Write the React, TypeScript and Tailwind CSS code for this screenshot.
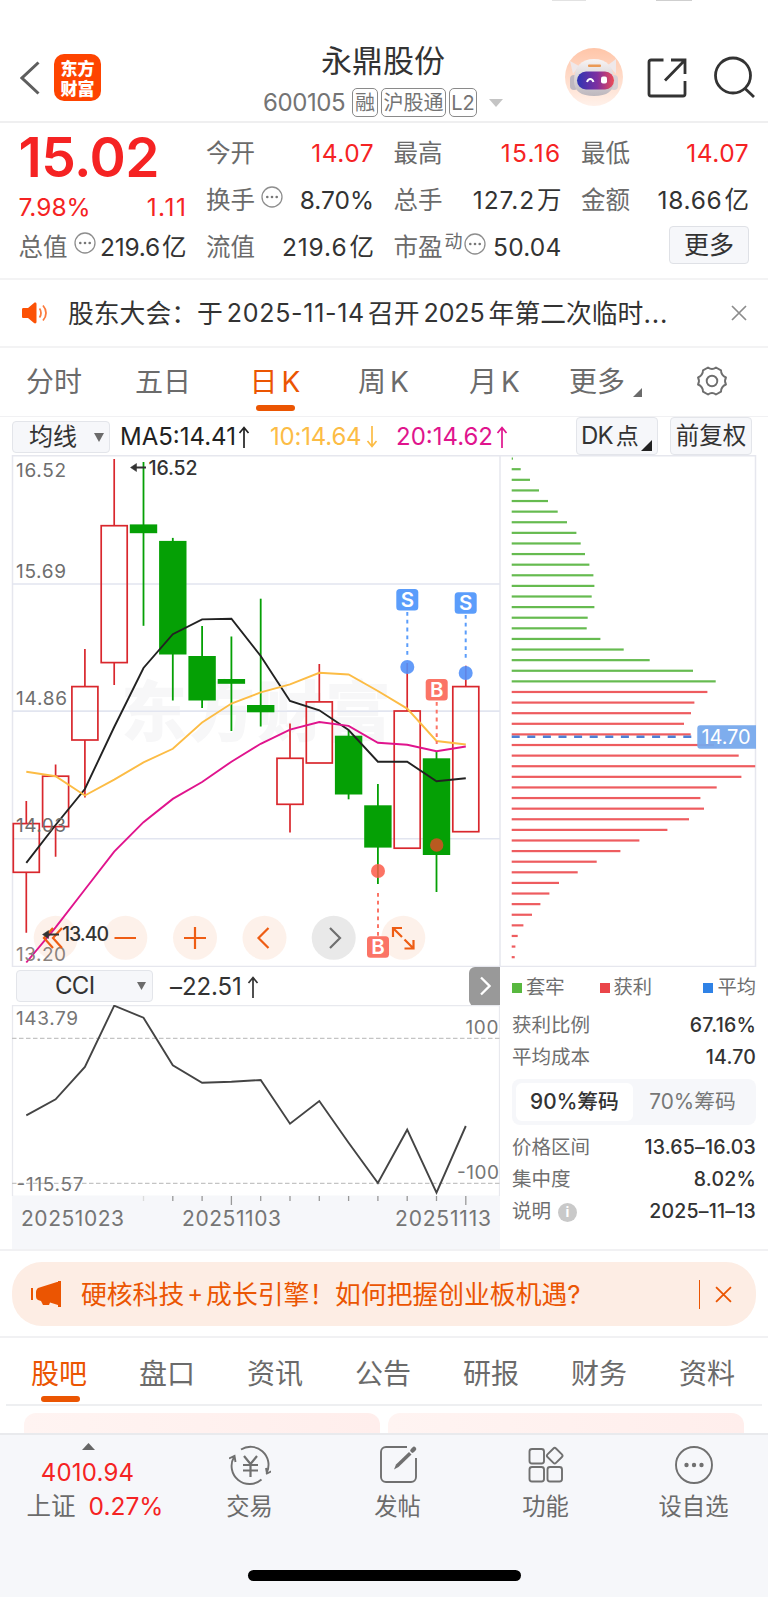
import React from 'react';
import clsx from 'clsx';

type Point = [number, number];

interface Candle {
  high: number;
  top: number;
  bottom: number;
  low: number;
  up: boolean;
}

// y positions inside the K-line canvas, one entry per trading day
const CANDLES: Candle[] = [
  { high: 801, top: 823.6, bottom: 872.3, low: 932.8, up: true },
  { high: 764.4, top: 776.2, bottom: 826.6, low: 856.7, up: true },
  { high: 649.1, top: 686.6, bottom: 740, low: 797.5, up: true },
  { high: 459, top: 525.7, bottom: 662.6, low: 685, up: true },
  { high: 462, top: 524.4, bottom: 533.2, low: 625.8, up: false },
  { high: 537.9, top: 540.9, bottom: 654.5, low: 700.5, up: false },
  { high: 626, top: 656, bottom: 700.5, low: 708, up: false },
  { high: 636.5, top: 679, bottom: 683.8, low: 731, up: false },
  { high: 598.7, top: 705, bottom: 712.3, low: 726.5, up: false },
  { high: 723.5, top: 758.3, bottom: 804.3, low: 832.4, up: true },
  { high: 664, top: 701.9, bottom: 763, low: 763, up: true },
  { high: 730, top: 735.7, bottom: 794.5, low: 799.3, up: false },
  { high: 784, top: 805.3, bottom: 847.6, low: 884, up: false },
  { high: 663, top: 711, bottom: 848.2, low: 848.2, up: true },
  { high: 752, top: 758.3, bottom: 855, low: 892, up: false },
  { high: 665.7, top: 686.6, bottom: 831.7, low: 831.7, up: true },
];

const MA5 = [862.8, 825, 789, 727, 668, 634.2, 619.4, 618.7, 656, 701, 710.3, 730, 761.7, 761.7, 781.3, 778.3];
const MA10 = [771.8, 776.2, 795.5, 779.6, 762.4, 748.8, 722.5, 703.5, 692.4, 684.3, 672.8, 674.5, 691, 708.6, 741, 744.5];
const MA20 = [962.5, 927.3, 889.5, 851.6, 822.2, 798.9, 782, 761.7, 743.8, 729.6, 722, 725.9, 742.8, 744.8, 751.2, 746.5];
const CCI = [1115.3, 1099.3, 1067, 1005.7, 1017.7, 1065.3, 1082.7, 1081.7, 1080, 1123.7, 1101, 1142.7, 1183, 1129.7, 1192.7, 1126];

const CHIPS_LOCKED = [1.3, 9, 18.3, 27.3, 36.3, 46, 55.3, 64.7, 69, 73.3, 77.7, 81.7, 82.7, 80, 82.7, 76, 75, 88.7, 112, 138, 181.3, 204];
const CHIPS_PROFIT = [195.7, 182.7, 179.3, 172.3, 179, 202.3, 227, 243.5, 229.7, 205, 188.7, 192.3, 177.3, 155.7, 127.7, 108.7, 85, 66, 47.3, 37.7, 28.7, 20.3, 11.7, 6, 3.7, 3];

const dayX = (i: number) => 26.3 + i * 29.3;
const toLine = (ys: number[]) => ys.map((y, i): Point => [dayX(i), y]).map((p) => p.join(',')).join(' ');

const MoreDots = ({ className }: { className?: string }) => (
  <svg viewBox="0 0 22 22" className={clsx('w-[22px] h-[22px] shrink-0', className)}>
    <circle cx="11" cy="11" r="10" fill="none" stroke="#8e8e8e" strokeWidth="1.3" />
    <circle cx="6.3" cy="11" r="1.3" fill="#777" />
    <circle cx="11" cy="11" r="1.3" fill="#777" />
    <circle cx="15.7" cy="11" r="1.3" fill="#777" />
  </svg>
);

const Cross = ({ size, color }: { size: number; color: string }) => (
  <svg width={size} height={size} viewBox="0 0 16 16">
    <path d="M1 1l14 14M15 1L1 15" stroke={color} strokeWidth="1.7" fill="none" />
  </svg>
);

const Header = () => (
  <header className="h-[123px] border-b-2 border-[#efeff0] flex pt-[44px] pl-[20px] pr-[12px] relative">
    <div className="absolute top-0 left-[552px] w-[34px] h-px bg-[#e2e2e2]" />
    <div className="absolute top-0 left-[656px] w-[36px] h-px bg-[#cfcfcf]" />
    <div className="flex items-start w-[242px] pt-[10px]">
      <svg width="20" height="46" viewBox="0 0 20 46">
        <path d="M18.5 8.5L2 24l16.500 15.500" fill="none" stroke="#5e5e5e" strokeWidth="3" />
      </svg>
      <div className="ml-[14px] w-[47px] h-[47px] rounded-[10px] bg-[#fe4400] text-white font-black text-[17px] flex flex-col items-center justify-center">
        <span className="h-[20px] leading-[20px] font-['Noto_Sans_CJK_SC',sans-serif]">东方</span>
        <span className="h-[20px] leading-[20px] font-['Noto_Sans_CJK_SC',sans-serif]">财富</span>
      </div>
    </div>
    <div className="flex flex-col items-center w-[242px]">
      <h1 className="text-[31px] leading-[34px] text-[#333]">永鼎股份</h1>
      <div className="flex items-center mt-[10px] text-[#747474] text-[20px] h-[29px]">
        <span className="text-[24px] tracking-[-0.4px] w-[89px]">600105</span>
        <span className="border-[1.5px] border-[#8a8a8a] rounded-[5px] h-[29px] w-[26px] flex items-center justify-center">融</span>
        <span className="border-[1.5px] border-[#8a8a8a] rounded-[5px] h-[29px] w-[65px] ml-[3px] flex items-center justify-center">沪股通</span>
        <span className="border-[1.5px] border-[#8a8a8a] rounded-[5px] h-[29px] w-[28px] ml-[3px] flex items-center justify-center">L2</span>
        <svg width="14" height="8" viewBox="0 0 14 8" className="ml-[12px]">
          <path d="M0 0h14L7 8z" fill="#c4c4c4" />
        </svg>
      </div>
    </div>
    <div className="flex items-start ml-auto">
      <svg width="60" height="60" viewBox="0 0 60 60" className="mt-[3px]">
        <defs>
          <linearGradient id="halo" x1="0" y1="0" x2="0" y2="1">
            <stop offset="0" stopColor="#ffc5a8" />
            <stop offset="1" stopColor="#fff1ea" />
          </linearGradient>
          <linearGradient id="visor" x1="0" y1="0" x2="1" y2="0">
            <stop offset="0" stopColor="#2d35b4" />
            <stop offset="0.55" stopColor="#7f2fa0" />
            <stop offset="1" stopColor="#ee4a55" />
          </linearGradient>
          <linearGradient id="shell" x1="0" y1="0" x2="0" y2="1">
            <stop offset="0" stopColor="#f8f4f4" />
            <stop offset="1" stopColor="#bdb7bd" />
          </linearGradient>
        </defs>
        <circle cx="30" cy="30" r="29" fill="url(#halo)" />
        <path d="M6 14l9 5-6 8zM52 12l-8 6 8 9z" fill="#efe8ea" />
        <rect x="6" y="28" width="8" height="15" rx="4" fill="#bfb8c0" />
        <rect x="46" y="28" width="8" height="15" rx="4" fill="#d8d0d4" />
        <path d="M10 34c0-14 7-22 20-22s20 8 20 22c0 10-7 15-20 15s-20-5-20-15z" fill="url(#shell)" />
        <rect x="24" y="17.500" width="13" height="2.500" rx="1" fill="#eb9a55" />
        <rect x="13" y="24.500" width="37" height="18" rx="9" fill="url(#visor)" />
        <path d="M23 35c1.500-4 5-4 6.500 0" stroke="#fff" strokeWidth="2" fill="none" />
        <rect x="37" y="29.500" width="6" height="7" rx="2" fill="#fff" />
      </svg>
      <svg width="40" height="40" viewBox="0 0 40 40" className="ml-[23px] mt-[14px]" fill="none" stroke="#333" strokeWidth="2.800">
        <path d="M16.500 2H4a2 2 0 0 0-2 2v32a2 2 0 0 0 2 2h32a2 2 0 0 0 2-2V23" />
        <path d="M24 2h14v14M37.500 2.500L18 22.500" />
      </svg>
      <svg width="42" height="42" viewBox="0 0 42 42" className="ml-[27px] mt-[12px]" fill="none" stroke="#333" strokeWidth="2.800">
        <circle cx="19" cy="19.500" r="17.500" />
        <path d="M30.500 32l9.500 9" />
      </svg>
    </div>
  </header>
);

interface StatProps {
  label: React.ReactNode;
  value: string;
  unit?: string;
  className?: string;
}

const Stat = ({ label, value, unit, className = 'text-[#333] tracking-[0.7px]' }: StatProps) => (
  <div className="h-[47px] flex items-center justify-between">
    <span className="text-[24.500px] text-[#6b6b6b] flex items-center">{label}</span>
    <span className={clsx('text-[24.500px] whitespace-nowrap flex items-center gap-[2px]', className)}>
      {value}
      {unit && <span className="tracking-normal">{unit}</span>}
    </span>
  </div>
);

const Quote = () => (
  <section className="h-[157px] border-b-2 border-[#f3f3f4] flex gap-[19.500px] pl-[18.500px] pt-[7px]">
    <div className="w-[168px]">
      <div className="h-[53px] pt-[2px] flex items-center text-[55px] font-semibold tracking-[-0.5px] text-[#f52323]">15.02</div>
      <div className="h-[48px] flex items-center justify-between text-[24.500px] text-[#f52323]">
        <span>7.98%</span>
        <span className="tracking-[1.500px] -mr-[1px]">1.11</span>
      </div>
      <div className="h-[32px] flex items-center justify-between">
        <span className="text-[24.500px] text-[#6b6b6b] flex items-center">总值<MoreDots className="ml-[6px] -mt-[8px]" /></span>
        <span className="text-[24.500px] tracking-[-0.2px] text-[#333] flex items-center gap-[2px]">219.6<span className="tracking-normal">亿</span></span>
      </div>
    </div>
    <div className="w-[168px]">
      <Stat label="今开" value="14.07" className="text-[#f52323] tracking-[0.500px]" />
      <Stat label={<>换手<MoreDots className="ml-[6px] -mt-[8px]" /></>} value="8.70%" className="text-[#333]" />
      <Stat label="流值" value="219.6" unit="亿" className="text-[#333] tracking-[0.9px]" />
    </div>
    <div className="w-[168px]">
      <Stat label="最高" value="15.16" className="text-[#f52323] tracking-[1.300px]" />
      <Stat label="总手" value="127.2" unit="万" className="text-[#333] tracking-[0.9px]" />
      <Stat
        label={<>市盈<span className="text-[18px] -mt-[12px] ml-[2px]">动</span><MoreDots className="ml-[1px] -mt-[8px]" /></>}
        value="50.04"
        className="text-[#333] tracking-[0.200px]"
      />
    </div>
    <div className="w-[168px]">
      <Stat label="最低" value="14.07" className="text-[#f52323] tracking-[0.500px]" />
      <Stat label="金额" value="18.66" unit="亿" />
      <div className="flex justify-end pt-[2px]">
        <button className="w-[80px] h-[38px] rounded-[4px] border border-[#dfe1e6] bg-[#f6f7fa] text-[25px] text-[#333] flex items-center justify-center">更多</button>
      </div>
    </div>
  </section>
);

const Notice = () => (
  <section className="h-[68px] border-b-2 border-[#f3f3f4] flex items-center pl-[21px] pr-[21px]">
    <svg width="28" height="22" viewBox="0 0 28 22">
      <path d="M1 7.500c0-1 .5-1.500 1.500-1.500H7l6-5c1-.8 2.500-.3 2.500 1v18c0 1.300-1.500 1.800-2.500 1l-6-5H2.500C1.500 16 1 15.500 1 14.500z" fill="#fc5206" />
      <path d="M18.500 6.500c2 2.500 2 6.500 0 9M22 3.500c4 4.500 4 10.500 0 15" fill="none" stroke="#fc7a3c" strokeWidth="1.800" />
    </svg>
    <p className="ml-[19px] pt-[2px] text-[25.800px] text-[#333] whitespace-nowrap flex-1 flex items-center">
      股东大会：<span>于</span>
      <span className="ml-[4px] text-[25px] tracking-[0.7px]">2025-11-14</span>
      <span className="ml-[3px]">召开</span>
      <span className="ml-[4px] text-[25px] tracking-[-0.1px]">2025</span>
      <span className="ml-[4px]">年第二次临时<span className="tracking-[0.9px]">...</span></span>
    </p>
    <Cross size={16} color="#8c8c8c" />
  </section>
);

const PERIODS = [
  { name: '分时', width: 'w-[108px]' },
  { name: '五日', width: 'w-[110px]' },
  { name: '日K', width: 'w-[114px]' },
  { name: '周K', width: 'w-[103px]' },
  { name: '月K', width: 'w-[119px]' },
];

const PeriodTabs = () => (
  <nav className="h-[69px] border-b border-[#f1f1f3] flex text-[28px] text-[#6b6b6b]">
    {PERIODS.map((p, i) => (
      <div key={p.name} className={clsx('flex flex-col items-center pt-[19px]', p.width, i === 2 && 'text-[#eb5502]')}>
        <span className="h-[30px] flex items-center gap-[4px]">
          {p.name.replace('K', '')}
          {p.name.includes('K') && <span>K</span>}
        </span>
        {i === 2 && <i className="mt-[8px] w-[39px] h-[6px] rounded-[3px] bg-[#eb5502]" />}
      </div>
    ))}
    <div className="w-[94px] flex items-start pl-[15px] pt-[19px]">
      <span className="h-[30px] flex items-center">更多</span>
      <svg width="9" height="9" viewBox="0 0 9 9" className="mt-[21px] ml-[8px]"><path d="M9 0v9H0z" fill="#6b6b6b" /></svg>
    </div>
    <svg width="32" height="32" viewBox="0 0 32 32" className="mt-[17px] ml-[48px]" fill="none" stroke="#6e6e6e" strokeWidth="1.900">
      <path d="M12 2.500Q16 5.500 20 2.500L25 5.300Q25 10.500 30 12.500Q28 16 30 19.500Q25 21.500 25 26.700L20 29.500Q16 26.500 12 29.500L7 26.700Q7 21.500 2 19.500Q4 16 2 12.500Q7 10.500 7 5.300z" strokeLinejoin="round" />
      <circle cx="16" cy="16" r="5.300" />
    </svg>
  </nav>
);

const Arrow = ({ down, color }: { down?: boolean; color: string }) => (
  <svg width="12" height="22" viewBox="0 0 12 22" className={clsx('shrink-0', down && 'rotate-180')}>
    <path d="M6 22V2M1.500 7L6 1.500 10.500 7" fill="none" stroke={color} strokeWidth="1.700" />
  </svg>
);

const Toolbar = () => (
  <div className="h-[38px] flex items-center pl-[12px] text-[24px]">
    <button className="w-[98px] h-[32px] mt-[2px] rounded-[4px] border border-[#e3e5ea] bg-[#f6f7fa] text-[#333] flex items-center pl-[16px]">
      均线
      <svg width="10" height="9" viewBox="0 0 10 9" className="ml-[17px]"><path d="M0 0h10L5 9z" fill="#6b6b6b" /></svg>
    </button>
    <span className="ml-[10px] w-[150px] pt-[2px] flex items-center gap-[2px] text-[#222]">MA5:14.41<Arrow color="#222" /></span>
    <span className="w-[126px] pt-[2px] flex items-center gap-[5px] text-[#fcbc45] tracking-[-0.2px]">10:14.64<Arrow down color="#fcbc45" /></span>
    <span className="w-[180px] pt-[2px] flex items-center gap-[3px] text-[#e0148d]">20:14.62<Arrow color="#e0148d" /></span>
    <button className="w-[82px] h-[38px] rounded-[4px] border border-[#e3e5ea] bg-[#f6f7fa] text-[#333] flex items-center pl-[4px] relative">
      <span className="tracking-[-0.8px]">DK</span><span className="ml-[3px] text-[23px]">点</span>
      <svg width="11" height="11" viewBox="0 0 11 11" className="absolute right-[5px] bottom-[3px]"><path d="M11 0v11H0z" fill="#222" /></svg>
    </button>
    <button className="ml-[12px] w-[82px] h-[38px] rounded-[4px] border border-[#e3e5ea] bg-[#f6f7fa] text-[#333] text-[23.500px] flex items-center justify-center whitespace-nowrap">前复权</button>
  </div>
);

interface MarkProps {
  x: number;
  y: number;
  letter: 'S' | 'B';
}

const Mark = ({ x, y, letter }: MarkProps) => (
  <g>
    <rect x={x - 11} y={y} width="22" height="21.500" rx="3.500" fill={letter === 'S' ? '#5b9dfb' : '#fb7466'} />
    <text x={x} y={y + 18} textAnchor="middle" fontSize="20.500" fontWeight="600" fill="#fff">{letter}</text>
  </g>
);

const KLine = () => (
  <svg width="768" height="512" viewBox="0 455 768 512" className="block" fontSize="19">
    <g fill="none" stroke="#e6e7ee" strokeWidth="1.500">
      <path d="M12.500 455.700H755.500V966.500H12.500zM500 455.700V966.500" />
      <path d="M12 583.900H500M12 711.300H500M12 838.800H500" stroke="#e2e5f0" />
    </g>
    <text x="121" y="736" fontSize="66" fontWeight="900" textLength="270" fill="#f7f7f8">东方财富</text>
    <path d="M12 711.300H500" stroke="#e2e5f0" strokeWidth="1.500" />

    {CANDLES.map((c, i) => {
      const x = dayX(i);
      return c.up ? (
        <g key={i} stroke="#d9272d" strokeWidth="1.700" fill="none">
          <path d={`M${x} ${c.high}V${c.top}M${x} ${c.bottom}V${c.low}`} />
          <rect x={x - 13} y={c.top} width="26" height={c.bottom - c.top} />
        </g>
      ) : (
        <g key={i} fill="#05a005">
          <rect x={x - 0.900} y={c.high} width="1.800" height={c.low - c.high} />
          <rect x={x - 13.700} y={c.top} width="27.400" height={c.bottom - c.top} />
        </g>
      );
    })}

    {/* floating chart controls */}
    {[55.700, 125.300, 195, 264.500, 403.300].map((cx) => (
      <circle key={cx} cx={cx} cy="937.800" r="22" fill="#fdeee6" fillOpacity="0.850" />
    ))}
    <circle cx="333.700" cy="937.800" r="22" fill="#e9e9e9" />

    <g fill="none" strokeWidth="1.900">
      <polyline points={toLine(MA5)} stroke="#222" />
      <polyline points={toLine(MA10)} stroke="#fcbc45" />
      <polyline points={toLine(MA20)} stroke="#e0148d" />
    </g>

    <g fill="#6e6e6e">
      <text x="16" y="477" textLength="50">16.52</text>
      <text x="16" y="577.500" textLength="50">15.69</text>
      <text x="16" y="705" textLength="51">14.86</text>
      <text x="16" y="832" textLength="50">14.03</text>
      <text x="16" y="960.500" textLength="50" fill="#8a817d">13.20</text>
    </g>

    <g fill="none" stroke="#ee5d14" strokeWidth="2.200">
      <path d="M53 928l-9 10 9 10M62 928l-9 10 9 10" />
      <path d="M114.500 938h21.500M184 938h22M195 927v22" />
      <path d="M268.500 928l-10 10 10 10" />
      <path d="M393 937V928h9M393 928l9 9M413.500 940v8.500h-9M413.500 948.500l-9-9" />
    </g>
    <path d="M330 928l10 10-10 10" fill="none" stroke="#6f6f6f" strokeWidth="2.200" />
    <g fill="#333" fontWeight="500" fontSize="19.500">
      <text x="148.500" y="474.800" textLength="49">16.52</text>
      <text x="62" y="941.300" textLength="47">13.40</text>
    </g>
    <g fill="#333" stroke="#333" strokeWidth="2">
      <path d="M133 467.500h13" />
      <path d="M130.500 467.500l6-4v8z" strokeWidth="0.500" />
      <path d="M45 934.500h14" />
      <path d="M42.500 934.500l6-4v8z" strokeWidth="0.500" />
    </g>

    {/* buy / sell marks */}
    <g fill="none" strokeWidth="2" strokeDasharray="3.800 4">
      <path d="M407.300 612V655M465.700 615V658" stroke="#5b9dfb" />
      <path d="M436.700 702V744M378 893V936" stroke="#fb7466" />
    </g>
    <circle cx="407.300" cy="667" r="7" fill="#5290f8" fillOpacity="0.900" />
    <circle cx="465.700" cy="673" r="7" fill="#5290f8" fillOpacity="0.900" />
    <circle cx="436.700" cy="845" r="6.700" fill="#b85a20" />
    <circle cx="378" cy="871" r="7" fill="#fb5a49" fillOpacity="0.850" />
    <Mark x={407.300} y={589} letter="S" />
    <Mark x={465.700} y={592.300} letter="S" />
    <Mark x={436.700} y={679} letter="B" />
    <Mark x={378} y={936.300} letter="B" />

    {/* chip distribution */}
    {[...CHIPS_LOCKED, ...CHIPS_PROFIT].map((w, i) => (
      <rect key={i} x="511.700" y={457.500 + i * 10.608} width={w} height="2.200" fill={i < CHIPS_LOCKED.length ? '#66bb50' : '#ee5c5f'} />
    ))}
    <path d="M511.700 736.800H692" stroke="#4d80d6" strokeWidth="2.600" strokeDasharray="8 7.600" />
    <path d="M700.300 725.200H756V748.800H700.300a3 3 0 0 1-3-3V728.200a3 3 0 0 1 3-3z" fill="#77a9ec" fillOpacity="0.950" />
    <text x="701.500" y="744" fontSize="20" textLength="49" fill="#fff">14.70</text>
  </svg>
);

const CciChart = () => (
  <svg width="500" height="244" viewBox="0 1005 500 244" className="block" fontSize="19">
    <rect x="12" y="1195.500" width="488" height="54" fill="#f6f7fa" />
    <path d="M12.500 1196V1005.500H500M499.500 1005V1196" fill="none" stroke="#e8e9ee" strokeWidth="1.300" />
    <path d="M12 1038.300H500M12 1183.300H500" fill="none" stroke="#c4c4c4" strokeWidth="1.300" strokeDasharray="4.500 2.500" />
    <polyline points={toLine(CCI)} fill="none" stroke="#444" strokeWidth="1.900" />
    <g fill="#767676">
      <text x="16" y="1024.700" textLength="62">143.79</text>
      <text x="16.500" y="1190.500" textLength="67">-115.57</text>
      <text x="465.500" y="1033.500" textLength="33">100</text>
      <text x="457" y="1178.500" textLength="42">-100</text>
    </g>
    {CCI.map((_, i) => i >= 4 && (
      <path key={i} d={`M${dayX(i)} 1196v${i === 7 || i === 15 ? 9 : 5}`} stroke={i === 4 ? '#dcdcdc' : '#999'} strokeWidth="1.300" />
    ))}
    <g fill="#757575" fontSize="21">
      <text x="21" y="1225.700" textLength="103">20251023</text>
      <text x="182" y="1225.700" textLength="99">20251103</text>
      <text x="395" y="1225.700" textLength="96">20251113</text>
    </g>
  </svg>
);

const CciPanel = () => (
  <div className="w-[500px]">
    <div className="h-[38px] flex items-center pl-[16px]">
      <button className="w-[137px] h-[32px] rounded-[4px] border border-[#e3e5ea] bg-[#f6f7fa] text-[#333] text-[24px] tracking-[-0.7px] flex items-center pl-[38px]">
        CCI
        <svg width="9" height="8" viewBox="0 0 9 8" className="ml-[43px]"><path d="M0 0h9L4.500 8z" fill="#6b6b6b" /></svg>
      </button>
      <span className="ml-[17px] pt-[2px] text-[24px] tracking-[-0.1px] text-[#333] flex items-center gap-[5px]">–22.51<Arrow color="#333" /></span>
      <button className="ml-auto w-[31px] h-[39px] rounded-l-[6px] bg-[#999] flex items-center justify-center">
        <svg width="12" height="20" viewBox="0 0 12 20"><path d="M2 1.500l8.500 8.500L2 18.500" fill="none" stroke="#fff" strokeWidth="2.300" /></svg>
      </button>
    </div>
    <CciChart />
  </div>
);

const LEGEND = [
  { name: '套牢', dot: 'bg-[#58b83f]' },
  { name: '获利', dot: 'bg-[#ea4549]' },
  { name: '平均', dot: 'bg-[#2f82e6]' },
];

const ChipRow = ({ label, value }: { label: React.ReactNode; value: string }) => (
  <div className="h-[32px] flex items-center justify-between">
    <span className="text-[19.500px] text-[#6f6f6f] flex items-center">{label}</span>
    <span className="text-[19.500px] font-medium tracking-[0.2px] text-[#333]">{value}</span>
  </div>
);

const ChipPanel = () => (
  <div className="w-[244px] ml-[12px] pt-[10px]">
    <div className="h-[22px] flex text-[19.300px] text-[#6f6f6f]">
      {LEGEND.map((l, i) => (
        <span key={l.name} className={clsx('flex items-center whitespace-nowrap', i === 1 && 'ml-[35px]', i === 2 && 'ml-auto')}>
          <i className={clsx('w-[10px] h-[10px] mr-[4px] -mt-[1px]', l.dot)} />
          {l.name}
        </span>
      ))}
    </div>
    <div className="pt-[11px]">
      <ChipRow label="获利比例" value="67.16%" />
      <ChipRow label="平均成本" value="14.70" />
    </div>
    <div className="h-[46px] mt-[5px] rounded-[8px] bg-[#f6f7fa] flex items-center px-[4px] text-[20.800px]">
      <span className="w-[117px] h-[38px] rounded-[6px] bg-white text-[#333] font-medium flex items-center justify-center">90%筹码</span>
      <span className="flex-1 text-[#777] flex items-center justify-center">70%筹码</span>
    </div>
    <div className="pt-[7px]">
      <ChipRow label="价格区间" value="13.65–16.03" />
      <ChipRow label="集中度" value="8.02%" />
      <ChipRow
        label={
          <>
            说明
            <i className="ml-[7px] w-[19px] h-[19px] rounded-full bg-[#c9c9c9] text-white text-[14px] font-bold not-italic flex items-center justify-center">i</i>
          </>
        }
        value="2025–11–13"
      />
    </div>
  </div>
);

const Banner = () => (
  <section className="h-[89px] border-y-2 border-[#f1f1f3] px-[12px] pt-[11px]">
    <div className="h-[64px] rounded-[30px] bg-[#fdede4] flex items-center pl-[18px] pr-[24px] text-[#eb5502]">
      <svg width="32" height="28" viewBox="0 0 32 28" fill="#eb5502">
        <path d="M1 8h2v12H1zM8 8l19-6h1V1h3v26h-3v-2l-8-2.500-1 2.500h-6l-2-4-3-1c-1.500-1-2-2-2-4V12c0-2 1-3 2-4z" />
      </svg>
      <p className="ml-[19px] pt-[1px] flex-1 flex items-center whitespace-nowrap text-[25.800px]">
        硬核科技<span className="mx-[3px] text-[24px]">+</span>成长引擎！如何把握创业板机遇<span>?</span>
      </p>
      <i className="w-[1.500px] h-[29px] bg-[#eb5502] mr-[15px]" />
      <Cross size={17} color="#eb5502" />
    </div>
  </section>
);

const TABS = ['股吧', '盘口', '资讯', '公告', '研报', '财务', '资料'];

const InfoTabs = () => (
  <section className="h-[95px] overflow-hidden">
    <nav className="mx-[6px] h-[68px] border-b-2 border-[#eeeff1] flex text-[28px] text-[#6b6b6b]">
      {TABS.map((t, i) => (
        <div key={t} className={clsx('w-[108px] flex flex-col items-center pt-[19px] pr-[2px]', i === 0 && 'text-[#eb5502]')}>
          <span className="h-[34px] flex items-center">{t}</span>
          {i === 0 && <i className="mt-[5px] ml-[2px] w-[39px] h-[6px] rounded-[3px] bg-[#eb5502]" />}
        </div>
      ))}
    </nav>
    <div className="flex gap-[8px] px-[24px] pt-[7px]">
      <div className="flex-1 h-[60px] rounded-[12px] bg-gradient-to-r from-[#fff4f2] to-[#ffeeec]" />
      <div className="flex-1 h-[60px] rounded-[12px] bg-gradient-to-r from-[#fff4f2] to-[#ffeeec]" />
    </div>
  </section>
);

const NavItem = ({ label, children }: { label: string; children: React.ReactNode }) => (
  <div className="w-[148px] flex flex-col items-center pt-[10px] pr-[1px]">
    <svg width="42" height="40" viewBox="0 0 42 40" fill="none" stroke="#707070" strokeWidth="1.900">{children}</svg>
    <span className="mt-[9px] h-[26px] flex items-center text-[23.300px] text-[#6b6b6b]">{label}</span>
  </div>
);

const BottomBar = () => (
  <footer className="h-[164px] border-t-2 border-[#e9eaed] bg-[#f6f7fa]">
    <div className="flex h-[130px]">
      <div className="w-[176px] flex flex-col items-center pt-[8px] pl-[10px]">
        <svg width="13" height="7" viewBox="0 0 13 7" className="-ml-[10px]"><path d="M0 7L6.500 0 13 7z" fill="#666" /></svg>
        <span className="mt-[11px] h-[24px] flex items-center text-[24px] tracking-[0.2px] text-[#f52323] -ml-[11px]">4010.94</span>
        <div className="mt-[8px] h-[26px] flex items-center text-[24.500px] text-[#6b6b6b] whitespace-nowrap ml-[4px]">
          上证<span className="ml-[13px] text-[#f52323]">0.27%</span>
        </div>
      </div>
      <NavItem label="交易">
        <path d="M12 4.500A18 18 0 0 1 38 27M38 28.500l-1-5.500M37 29l6-3" />
        <path d="M32.500 34.500A18 18 0 0 1 5 12M0 13.500l5.500-2.500 1 6" />
        <path d="M15 11l6.500 8 6.500-8M14 20h15M14 25.500h15M21.500 19v13" strokeWidth="2.200" />
      </NavItem>
      <NavItem label="发帖">
        <path d="M30 2H9a5 5 0 0 0-5 5v25a5 5 0 0 0 5 5h25a5 5 0 0 0 5-5V13" />
        <path d="M17 24.500l2-5L32 7l2.500 2.500-13 12.500z" fill="#707070" stroke="none" />
        <path d="M35.500 5.500l1.500-1.500" strokeWidth="4.500" strokeLinecap="round" />
      </NavItem>
      <NavItem label="功能">
        <rect x="4.500" y="4" width="14.500" height="14.500" rx="2.500" />
        <rect x="4.500" y="22" width="14.500" height="14.500" rx="2.500" />
        <rect x="22.500" y="22" width="14.500" height="14.500" rx="2.500" />
        <rect x="23.700" y="4.700" width="12" height="12" rx="1.800" transform="rotate(45 29.700 10.700)" />
      </NavItem>
      <NavItem label="设自选">
        <circle cx="21" cy="20" r="18" />
        <g fill="#707070" stroke="none">
          <circle cx="13.500" cy="20" r="2.200" />
          <circle cx="21" cy="20" r="2.200" />
          <circle cx="28.500" cy="20" r="2.200" />
        </g>
      </NavItem>
    </div>
    <div className="mx-auto mt-[5px] w-[273px] h-[11px] rounded-full bg-black" />
  </footer>
);

export default function App() {
  return (
    <div className="w-[768px] h-[1597px] overflow-hidden bg-white leading-none font-['Inter','Noto_Sans_CJK_SC',sans-serif]">
      <Header />
      <Quote />
      <Notice />
      <PeriodTabs />
      <Toolbar />
      <KLine />
      <div className="flex h-[282px]">
        <CciPanel />
        <ChipPanel />
      </div>
      <Banner />
      <InfoTabs />
      <BottomBar />
    </div>
  );
}
